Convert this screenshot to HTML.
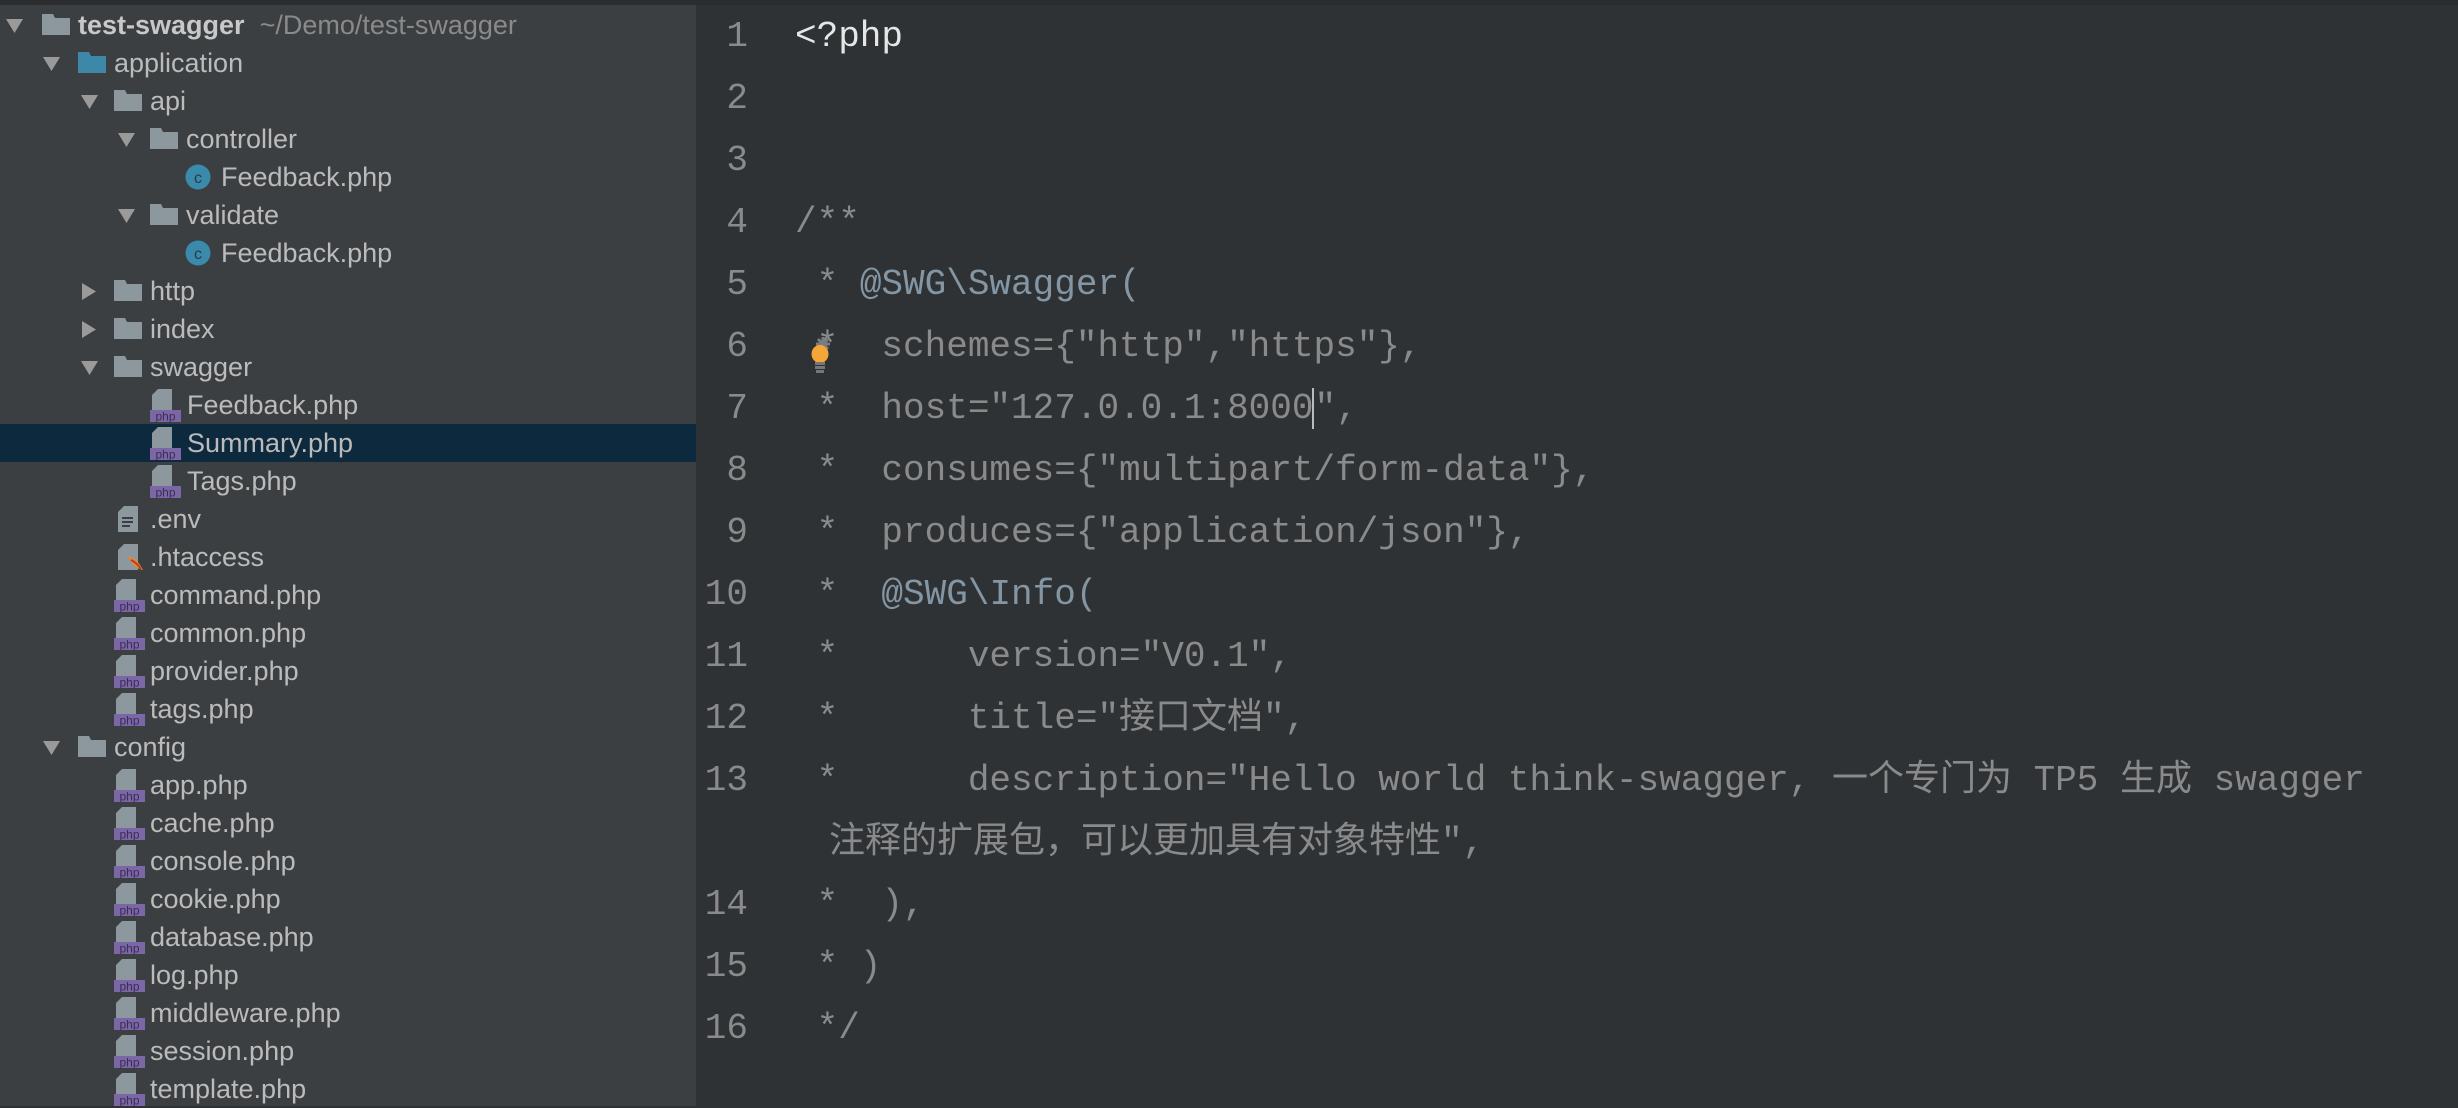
<!DOCTYPE html>
<html><head><meta charset="utf-8">
<style>
*{margin:0;padding:0;box-sizing:border-box}
body{width:2458px;height:1106px;overflow:hidden;background:#2e3235;position:relative;font-family:"Liberation Sans","Noto Sans CJK SC",sans-serif}
#top{position:absolute;left:0;top:0;width:2458px;height:5px;background:#2a2c2e}
#side{position:absolute;left:0;top:5px;width:696px;height:1101px;background:#3c3f41}
.row{position:absolute;left:0;width:696px;height:38px}
.row.sel{background:#0d293e}
.row span.t{position:absolute;top:5px;font-size:27px;color:#bbbbbb;white-space:nowrap;line-height:28px}
.row svg{position:absolute}
#ed{position:absolute;left:696px;top:5px;width:1762px;height:1101px;background:#2e3235}
.ln{position:absolute;width:60px;left:688px;text-align:right;font-family:"Liberation Mono",monospace;font-size:36px;color:#8a8a8a;line-height:62px}
.cd{position:absolute;left:795px;font-family:"Liberation Mono","Noto Sans CJK SC",monospace;font-size:36px;color:#8a8a8a;line-height:62px;white-space:pre}
.tag{color:#8496a3}
</style></head><body>
<div id="top"></div>
<div id="side"></div>
<div id="ed"></div>
<div class="row" style="top:6px"><svg style="left:6px;top:13px" width="17" height="14"><path d="M0 0H17L8.5 14Z" fill="#9a9a9a"/></svg><svg style="left:42px;top:8px" width="28" height="21"><path d="M0 0H11L13 4H28V21H0Z" fill="#8c979e"/></svg><span class="t" style="left:78px;font-weight:bold;color:#c8c8c8">test-swagger <span style="font-weight:normal;color:#8a8a8a">&nbsp;~/Demo/test-swagger</span></span></div>
<div class="row" style="top:44px"><svg style="left:43px;top:13px" width="17" height="14"><path d="M0 0H17L8.5 14Z" fill="#9a9a9a"/></svg><svg style="left:78px;top:8px" width="28" height="21"><path d="M0 0H11L13 4H28V21H0Z" fill="#3d87a8"/></svg><span class="t" style="left:114px">application</span></div>
<div class="row" style="top:82px"><svg style="left:81px;top:13px" width="17" height="14"><path d="M0 0H17L8.5 14Z" fill="#9a9a9a"/></svg><svg style="left:114px;top:8px" width="28" height="21"><path d="M0 0H11L13 4H28V21H0Z" fill="#8c979e"/></svg><span class="t" style="left:150px">api</span></div>
<div class="row" style="top:120px"><svg style="left:118px;top:13px" width="17" height="14"><path d="M0 0H17L8.5 14Z" fill="#9a9a9a"/></svg><svg style="left:150px;top:8px" width="28" height="21"><path d="M0 0H11L13 4H28V21H0Z" fill="#8c979e"/></svg><span class="t" style="left:186px">controller</span></div>
<div class="row" style="top:158px"><svg style="left:185px;top:6px" width="26" height="26"><circle cx="13" cy="13" r="12.5" fill="#3a8aab"/><text x="13" y="19" font-size="16" text-anchor="middle" fill="#2b3a42" font-family="Liberation Sans">c</text></svg><span class="t" style="left:221px">Feedback.php</span></div>
<div class="row" style="top:196px"><svg style="left:118px;top:13px" width="17" height="14"><path d="M0 0H17L8.5 14Z" fill="#9a9a9a"/></svg><svg style="left:150px;top:8px" width="28" height="21"><path d="M0 0H11L13 4H28V21H0Z" fill="#8c979e"/></svg><span class="t" style="left:186px">validate</span></div>
<div class="row" style="top:234px"><svg style="left:185px;top:6px" width="26" height="26"><circle cx="13" cy="13" r="12.5" fill="#3a8aab"/><text x="13" y="19" font-size="16" text-anchor="middle" fill="#2b3a42" font-family="Liberation Sans">c</text></svg><span class="t" style="left:221px">Feedback.php</span></div>
<div class="row" style="top:272px"><svg style="left:82px;top:11px" width="14" height="17"><path d="M0 0L14 8.5L0 17Z" fill="#9a9a9a"/></svg><svg style="left:114px;top:8px" width="28" height="21"><path d="M0 0H11L13 4H28V21H0Z" fill="#8c979e"/></svg><span class="t" style="left:150px">http</span></div>
<div class="row" style="top:310px"><svg style="left:82px;top:11px" width="14" height="17"><path d="M0 0L14 8.5L0 17Z" fill="#9a9a9a"/></svg><svg style="left:114px;top:8px" width="28" height="21"><path d="M0 0H11L13 4H28V21H0Z" fill="#8c979e"/></svg><span class="t" style="left:150px">index</span></div>
<div class="row" style="top:348px"><svg style="left:81px;top:13px" width="17" height="14"><path d="M0 0H17L8.5 14Z" fill="#9a9a9a"/></svg><svg style="left:114px;top:8px" width="28" height="21"><path d="M0 0H11L13 4H28V21H0Z" fill="#8c979e"/></svg><span class="t" style="left:150px">swagger</span></div>
<div class="row" style="top:386px"><svg style="left:150px;top:3px" width="31" height="33"><path d="M8 0H22V22H2V6Z" fill="#8c979e"/><rect x="0" y="21" width="31" height="12" fill="#7b66a6"/><text x="15.5" y="31.5" font-size="12" text-anchor="middle" fill="#3a2d56" font-family="Liberation Sans">php</text></svg><span class="t" style="left:187px">Feedback.php</span></div>
<div class="row sel" style="top:424px"><svg style="left:150px;top:3px" width="31" height="33"><path d="M8 0H22V22H2V6Z" fill="#8c979e"/><rect x="0" y="21" width="31" height="12" fill="#7b66a6"/><text x="15.5" y="31.5" font-size="12" text-anchor="middle" fill="#3a2d56" font-family="Liberation Sans">php</text></svg><span class="t" style="left:187px">Summary.php</span></div>
<div class="row" style="top:462px"><svg style="left:150px;top:3px" width="31" height="33"><path d="M8 0H22V22H2V6Z" fill="#8c979e"/><rect x="0" y="21" width="31" height="12" fill="#7b66a6"/><text x="15.5" y="31.5" font-size="12" text-anchor="middle" fill="#3a2d56" font-family="Liberation Sans">php</text></svg><span class="t" style="left:187px">Tags.php</span></div>
<div class="row" style="top:500px"><svg style="left:117px;top:6px" width="22" height="26"><path d="M7 0H21V26H1V6Z" fill="#8c979e"/><rect x="5" y="11" width="11" height="2" fill="#3c3f41"/><rect x="5" y="15" width="11" height="2" fill="#3c3f41"/><rect x="5" y="19" width="8" height="2" fill="#3c3f41"/></svg><span class="t" style="left:150px">.env</span></div>
<div class="row" style="top:538px"><svg style="left:117px;top:6px" width="28" height="28"><path d="M7 0H21V26H1V6Z" fill="#8c979e"/><path d="M11 12Q20 14 26 26Q16 24 11 12Z" fill="#e8892a"/><path d="M14 16Q20 19 24 25" stroke="#c0392b" stroke-width="2" fill="none"/></svg><span class="t" style="left:150px">.htaccess</span></div>
<div class="row" style="top:576px"><svg style="left:114px;top:3px" width="31" height="33"><path d="M8 0H22V22H2V6Z" fill="#8c979e"/><rect x="0" y="21" width="31" height="12" fill="#7b66a6"/><text x="15.5" y="31.5" font-size="12" text-anchor="middle" fill="#3a2d56" font-family="Liberation Sans">php</text></svg><span class="t" style="left:150px">command.php</span></div>
<div class="row" style="top:614px"><svg style="left:114px;top:3px" width="31" height="33"><path d="M8 0H22V22H2V6Z" fill="#8c979e"/><rect x="0" y="21" width="31" height="12" fill="#7b66a6"/><text x="15.5" y="31.5" font-size="12" text-anchor="middle" fill="#3a2d56" font-family="Liberation Sans">php</text></svg><span class="t" style="left:150px">common.php</span></div>
<div class="row" style="top:652px"><svg style="left:114px;top:3px" width="31" height="33"><path d="M8 0H22V22H2V6Z" fill="#8c979e"/><rect x="0" y="21" width="31" height="12" fill="#7b66a6"/><text x="15.5" y="31.5" font-size="12" text-anchor="middle" fill="#3a2d56" font-family="Liberation Sans">php</text></svg><span class="t" style="left:150px">provider.php</span></div>
<div class="row" style="top:690px"><svg style="left:114px;top:3px" width="31" height="33"><path d="M8 0H22V22H2V6Z" fill="#8c979e"/><rect x="0" y="21" width="31" height="12" fill="#7b66a6"/><text x="15.5" y="31.5" font-size="12" text-anchor="middle" fill="#3a2d56" font-family="Liberation Sans">php</text></svg><span class="t" style="left:150px">tags.php</span></div>
<div class="row" style="top:728px"><svg style="left:43px;top:13px" width="17" height="14"><path d="M0 0H17L8.5 14Z" fill="#9a9a9a"/></svg><svg style="left:78px;top:8px" width="28" height="21"><path d="M0 0H11L13 4H28V21H0Z" fill="#8c979e"/></svg><span class="t" style="left:114px">config</span></div>
<div class="row" style="top:766px"><svg style="left:114px;top:3px" width="31" height="33"><path d="M8 0H22V22H2V6Z" fill="#8c979e"/><rect x="0" y="21" width="31" height="12" fill="#7b66a6"/><text x="15.5" y="31.5" font-size="12" text-anchor="middle" fill="#3a2d56" font-family="Liberation Sans">php</text></svg><span class="t" style="left:150px">app.php</span></div>
<div class="row" style="top:804px"><svg style="left:114px;top:3px" width="31" height="33"><path d="M8 0H22V22H2V6Z" fill="#8c979e"/><rect x="0" y="21" width="31" height="12" fill="#7b66a6"/><text x="15.5" y="31.5" font-size="12" text-anchor="middle" fill="#3a2d56" font-family="Liberation Sans">php</text></svg><span class="t" style="left:150px">cache.php</span></div>
<div class="row" style="top:842px"><svg style="left:114px;top:3px" width="31" height="33"><path d="M8 0H22V22H2V6Z" fill="#8c979e"/><rect x="0" y="21" width="31" height="12" fill="#7b66a6"/><text x="15.5" y="31.5" font-size="12" text-anchor="middle" fill="#3a2d56" font-family="Liberation Sans">php</text></svg><span class="t" style="left:150px">console.php</span></div>
<div class="row" style="top:880px"><svg style="left:114px;top:3px" width="31" height="33"><path d="M8 0H22V22H2V6Z" fill="#8c979e"/><rect x="0" y="21" width="31" height="12" fill="#7b66a6"/><text x="15.5" y="31.5" font-size="12" text-anchor="middle" fill="#3a2d56" font-family="Liberation Sans">php</text></svg><span class="t" style="left:150px">cookie.php</span></div>
<div class="row" style="top:918px"><svg style="left:114px;top:3px" width="31" height="33"><path d="M8 0H22V22H2V6Z" fill="#8c979e"/><rect x="0" y="21" width="31" height="12" fill="#7b66a6"/><text x="15.5" y="31.5" font-size="12" text-anchor="middle" fill="#3a2d56" font-family="Liberation Sans">php</text></svg><span class="t" style="left:150px">database.php</span></div>
<div class="row" style="top:956px"><svg style="left:114px;top:3px" width="31" height="33"><path d="M8 0H22V22H2V6Z" fill="#8c979e"/><rect x="0" y="21" width="31" height="12" fill="#7b66a6"/><text x="15.5" y="31.5" font-size="12" text-anchor="middle" fill="#3a2d56" font-family="Liberation Sans">php</text></svg><span class="t" style="left:150px">log.php</span></div>
<div class="row" style="top:994px"><svg style="left:114px;top:3px" width="31" height="33"><path d="M8 0H22V22H2V6Z" fill="#8c979e"/><rect x="0" y="21" width="31" height="12" fill="#7b66a6"/><text x="15.5" y="31.5" font-size="12" text-anchor="middle" fill="#3a2d56" font-family="Liberation Sans">php</text></svg><span class="t" style="left:150px">middleware.php</span></div>
<div class="row" style="top:1032px"><svg style="left:114px;top:3px" width="31" height="33"><path d="M8 0H22V22H2V6Z" fill="#8c979e"/><rect x="0" y="21" width="31" height="12" fill="#7b66a6"/><text x="15.5" y="31.5" font-size="12" text-anchor="middle" fill="#3a2d56" font-family="Liberation Sans">php</text></svg><span class="t" style="left:150px">session.php</span></div>
<div class="row" style="top:1070px"><svg style="left:114px;top:3px" width="31" height="33"><path d="M8 0H22V22H2V6Z" fill="#8c979e"/><rect x="0" y="21" width="31" height="12" fill="#7b66a6"/><text x="15.5" y="31.5" font-size="12" text-anchor="middle" fill="#3a2d56" font-family="Liberation Sans">php</text></svg><span class="t" style="left:150px">template.php</span></div>

<div class="ln" style="top:6px">1<br>2<br>3<br>4<br>5<br>6<br>7<br>8<br>9<br>10<br>11<br>12<br>13<br><br>14<br>15<br>16</div>
<div class="cd" style="top:6px"><span style="color:#e6e6e6">&lt;?php</span>


/**
 * <span class="tag">@SWG\Swagger(</span>
 *  schemes={"http","https"},
 *  host="127.0.0.1:8000<span style="border-left:2px solid #bbb;margin-left:-1px"></span>",
 *  consumes={"multipart/form-data"},
 *  produces={"application/json"},
 *  <span class="tag">@SWG\Info(</span>
 *      version="V0.1",
 *      title="接口文档",
 *      description="Hello world think-swagger, 一个专门为 TP5 生成 swagger
</div>
<div class="cd" style="top:812px;left:829px">注释的扩展包，可以更加具有对象特性",
</div>
<div class="cd" style="top:874px"> *  ),
 * )
 */</div>
<svg style="position:absolute;left:806px;top:337px" width="32" height="42"><g stroke="#7a7d80" stroke-width="3"><line x1="17" y1="0" x2="17" y2="14"/><line x1="10" y1="7" x2="24" y2="7"/><line x1="12" y1="2" x2="22" y2="12"/><line x1="22" y1="2" x2="12" y2="12"/></g><ellipse cx="14" cy="17" rx="8.5" ry="9" fill="#f5a638"/><rect x="9" y="25" width="10" height="3" fill="#777"/><rect x="9" y="29" width="10" height="3" fill="#777"/><rect x="10" y="33" width="8" height="3" fill="#777"/></svg>
</body></html>
